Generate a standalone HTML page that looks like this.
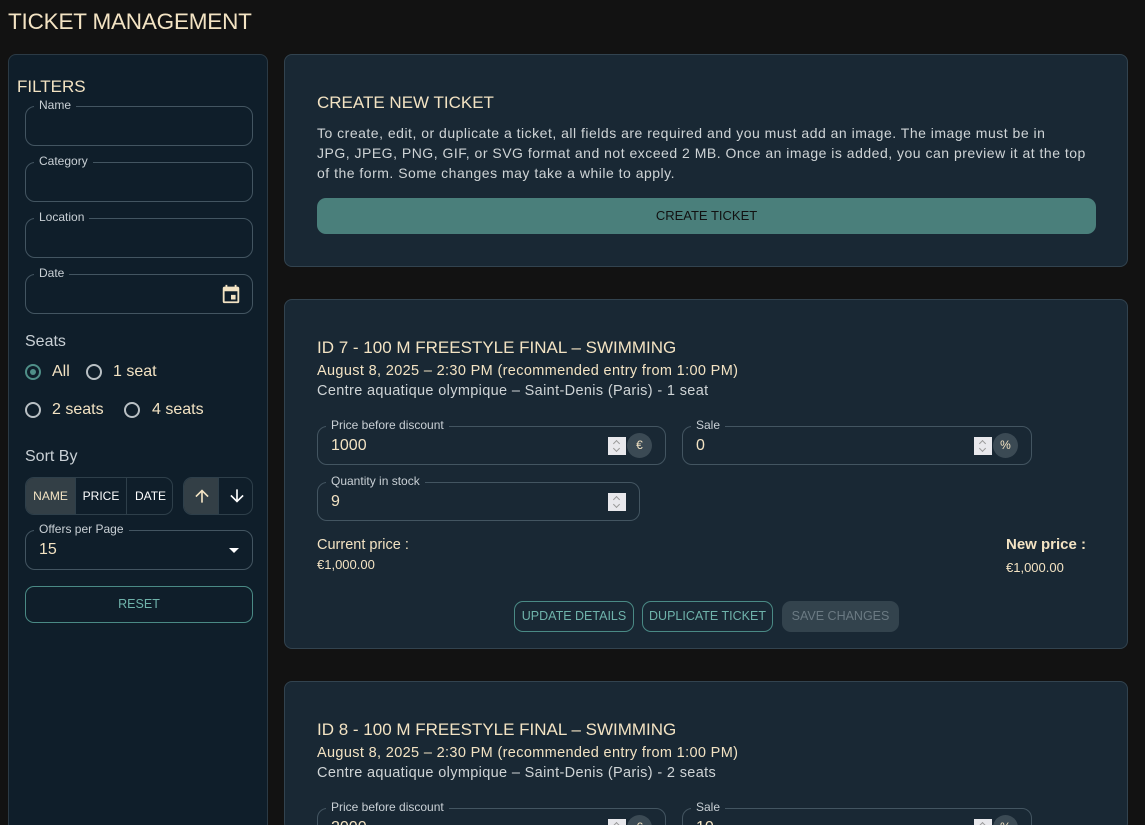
<!DOCTYPE html>
<html><head><meta charset="utf-8"><style>
*{box-sizing:border-box;margin:0;padding:0}
html,body{width:1145px;height:825px;overflow:hidden}
body{background:#121212;font-family:"Liberation Sans",sans-serif;color:#f3e3c3;position:relative}
.abs{position:absolute}
h1{position:absolute;left:8px;top:9px;font-size:22.5px;font-weight:normal;color:#f3e3c3;letter-spacing:-0.2px}
.side{position:absolute;left:8px;top:54px;width:260px;height:780px;background:#0f1e2a;border:1px solid #2b3a45;border-radius:8px}
.card{position:absolute;left:284px;width:844px;background:#192834;border:1px solid #32434f;border-radius:8px}
.field{position:absolute;border:1px solid #435561;border-radius:10px}
.field .lb{position:absolute;top:-9px;left:8px;padding:0 5px;font-size:12px;color:#c9d0d5;background:inherit;line-height:14px}
.side .field{background:#0f1e2a}
.card .field{background:#192834}
.val{position:absolute;left:13px;top:10px;font-size:16px;color:#f3e3c3}
.spin{position:absolute;width:18px;height:18px;background:#e8e8ec;top:10px}
.spin:before{content:"";position:absolute;left:6px;top:4px;width:4px;height:4px;border-left:1px solid #999;border-top:1px solid #999;transform:rotate(45deg)}
.spin:after{content:"";position:absolute;left:6px;top:9px;width:4px;height:4px;border-right:1px solid #999;border-bottom:1px solid #999;transform:rotate(45deg)}
.unit{position:absolute;width:25px;height:25px;border-radius:50%;background:#3b4a54;top:6px;font-size:12px;color:#f3e3c3;text-align:center;line-height:25px}
.radio{position:absolute;width:16px;height:16px;border:2px solid #b9c0c4;border-radius:50%}
.rl{position:absolute;font-size:16px;color:#f3e3c3}
.btn{position:absolute;border:1px solid #4a8a85;border-radius:9px;color:#6fb3ab;font-size:12.5px;text-align:center}
.sub{letter-spacing:0.35px}
</style></head><body>
<h1>TICKET MANAGEMENT</h1>
<div class="side">
 <div class="abs" style="left:8px;top:22px;font-size:17px">FILTERS</div>
 <div class="field" style="left:16px;top:51px;width:228px;height:40px"><span class="lb">Name</span></div>
 <div class="field" style="left:16px;top:107px;width:228px;height:40px"><span class="lb">Category</span></div>
 <div class="field" style="left:16px;top:163px;width:228px;height:40px"><span class="lb">Location</span></div>
 <div class="field" style="left:16px;top:219px;width:228px;height:40px"><span class="lb">Date</span>
  <svg class="abs" style="left:194px;top:8px" width="22" height="22" viewBox="0 0 24 24"><path fill="#f3e3c3" d="M19 4h-1V2h-2v2H8V2H6v2H5a2 2 0 0 0-2 2v14a2 2 0 0 0 2 2h14a2 2 0 0 0 2-2V6a2 2 0 0 0-2-2zm0 16H5V9h14v11zm-7-7h5v5h-5z"/></svg></div>
 <div class="abs" style="left:16px;top:278px;font-size:16px;color:#c9d0d5">Seats</div>
 <div class="radio" style="left:16px;top:309px;border-color:#4f8f88"><div style="position:absolute;left:3px;top:3px;width:6px;height:6px;border-radius:50%;background:#4f8f88"></div></div>
 <div class="rl" style="left:43px;top:308px">All</div>
 <div class="radio" style="left:77px;top:309px"></div>
 <div class="rl" style="left:104px;top:308px">1 seat</div>
 <div class="radio" style="left:16px;top:347px"></div>
 <div class="rl" style="left:43px;top:346px">2 seats</div>
 <div class="radio" style="left:115px;top:347px"></div>
 <div class="rl" style="left:143px;top:346px">4 seats</div>
 <div class="abs" style="left:16px;top:393px;font-size:16px;color:#c9d0d5">Sort By</div>
 <div class="abs" style="left:16px;top:422px;width:148px;height:38px;border:1px solid #2e3f4a;border-radius:9px;overflow:hidden;font-size:12px;color:#fff">
  <div class="abs" style="left:0;top:0;width:50px;height:38px;background:#333f46;border-right:1px solid #2e3f4a;color:#f3e3c3;text-align:center;line-height:36px">NAME</div>
  <div class="abs" style="left:50px;top:0;width:51px;height:38px;border-right:1px solid #2e3f4a;text-align:center;line-height:36px">PRICE</div>
  <div class="abs" style="left:101px;top:0;width:47px;height:38px;text-align:center;line-height:36px">DATE</div>
 </div>
 <div class="abs" style="left:174px;top:422px;width:70px;height:38px;border:1px solid #2e3f4a;border-radius:9px;overflow:hidden">
  <div class="abs" style="left:0;top:0;width:35px;height:38px;background:#333f46;border-right:1px solid #2e3f4a"></div>
  <svg class="abs" style="left:8px;top:8px" width="20" height="20" viewBox="0 0 24 24"><path fill="#f3e3c3" d="M4 12l1.41 1.41L11 7.83V20h2V7.83l5.58 5.59L20 12l-8-8-8 8z"/></svg>
  <svg class="abs" style="left:43px;top:8px" width="20" height="20" viewBox="0 0 24 24"><path fill="#fff" d="M20 12l-1.41-1.41L13 16.17V4h-2v12.17l-5.58-5.59L4 12l8 8 8-8z"/></svg>
 </div>
 <div class="field" style="left:16px;top:475px;width:228px;height:40px"><span class="lb">Offers per Page</span><div class="val" style="top:10px">15</div>
  <div class="abs" style="left:203px;top:17px;width:0;height:0;border-left:5px solid transparent;border-right:5px solid transparent;border-top:5px solid #fff"></div></div>
 <div class="btn" style="left:16px;top:531px;width:228px;height:37px;line-height:35px">RESET</div>
</div>

<div class="card" style="top:54px;height:213px">
 <div class="abs" style="left:32px;top:38px;font-size:17px">CREATE NEW TICKET</div>
 <div class="abs" style="left:32px;top:68px;width:790px;font-size:14px;line-height:20px;color:#cfd4d6;letter-spacing:0.5px;white-space:nowrap">To create, edit, or duplicate a ticket, all fields are required and you must add an image. The image must be in<br>JPG, JPEG, PNG, GIF, or SVG format and not exceed 2 MB. Once an image is added, you can preview it at the top<br>of the form. Some changes may take a while to apply.</div>
 <div class="abs" style="left:32px;top:143px;width:779px;height:36px;background:#4a7f7b;border-radius:9px;text-align:center;line-height:36px;font-size:13px;color:#111">CREATE TICKET</div>
</div>

<div class="card" style="top:299px;height:350px">
 <div class="abs" style="left:32px;top:38px;font-size:17px">ID 7 - 100 M FREESTYLE FINAL – SWIMMING</div>
 <div class="abs sub" style="left:32px;top:63px;font-size:14.5px">August 8, 2025 – 2:30 PM (recommended entry from 1:00 PM)</div>
 <div class="abs sub" style="left:32px;top:83px;font-size:14.5px;color:#cfd4d6">Centre aquatique olympique – Saint-Denis (Paris) - 1 seat</div>
 <div class="field" style="left:32px;top:126px;width:349px;height:39px"><span class="lb">Price before discount</span><div class="val">1000</div><div class="spin" style="left:290px"></div><div class="unit" style="left:309px">€</div></div>
 <div class="field" style="left:397px;top:126px;width:350px;height:39px"><span class="lb">Sale</span><div class="val">0</div><div class="spin" style="left:291px"></div><div class="unit" style="left:310px">%</div></div>
 <div class="field" style="left:32px;top:182px;width:323px;height:39px"><span class="lb">Quantity in stock</span><div class="val">9</div><div class="spin" style="left:290px"></div></div>
 <div class="abs" style="left:32px;top:237px;font-size:14.5px">Current price :</div>
 <div class="abs" style="left:32px;top:257px;font-size:13px">€1,000.00</div>
 <div class="abs" style="left:721px;top:236px;font-size:15px;font-weight:bold">New price :</div>
 <div class="abs" style="left:721px;top:260px;font-size:13px">€1,000.00</div>
 <div class="btn" style="left:229px;top:301px;width:120px;height:31px;line-height:29px">UPDATE DETAILS</div>
 <div class="btn" style="left:357px;top:301px;width:131px;height:31px;line-height:29px">DUPLICATE TICKET</div>
 <div class="btn" style="left:497px;top:301px;width:117px;height:31px;line-height:31px;border:none;background:#33434d;color:#6b7a83">SAVE CHANGES</div>
</div>

<div class="card" style="top:681px;height:150px">
 <div class="abs" style="left:32px;top:38px;font-size:17px">ID 8 - 100 M FREESTYLE FINAL – SWIMMING</div>
 <div class="abs sub" style="left:32px;top:63px;font-size:14.5px">August 8, 2025 – 2:30 PM (recommended entry from 1:00 PM)</div>
 <div class="abs sub" style="left:32px;top:83px;font-size:14.5px;color:#cfd4d6">Centre aquatique olympique – Saint-Denis (Paris) - 2 seats</div>
 <div class="field" style="left:32px;top:126px;width:349px;height:39px"><span class="lb">Price before discount</span><div class="val">2000</div><div class="spin" style="left:290px"></div><div class="unit" style="left:309px">€</div></div>
 <div class="field" style="left:397px;top:126px;width:350px;height:39px"><span class="lb">Sale</span><div class="val">10</div><div class="spin" style="left:291px"></div><div class="unit" style="left:310px">%</div></div>
</div>
</body></html>
